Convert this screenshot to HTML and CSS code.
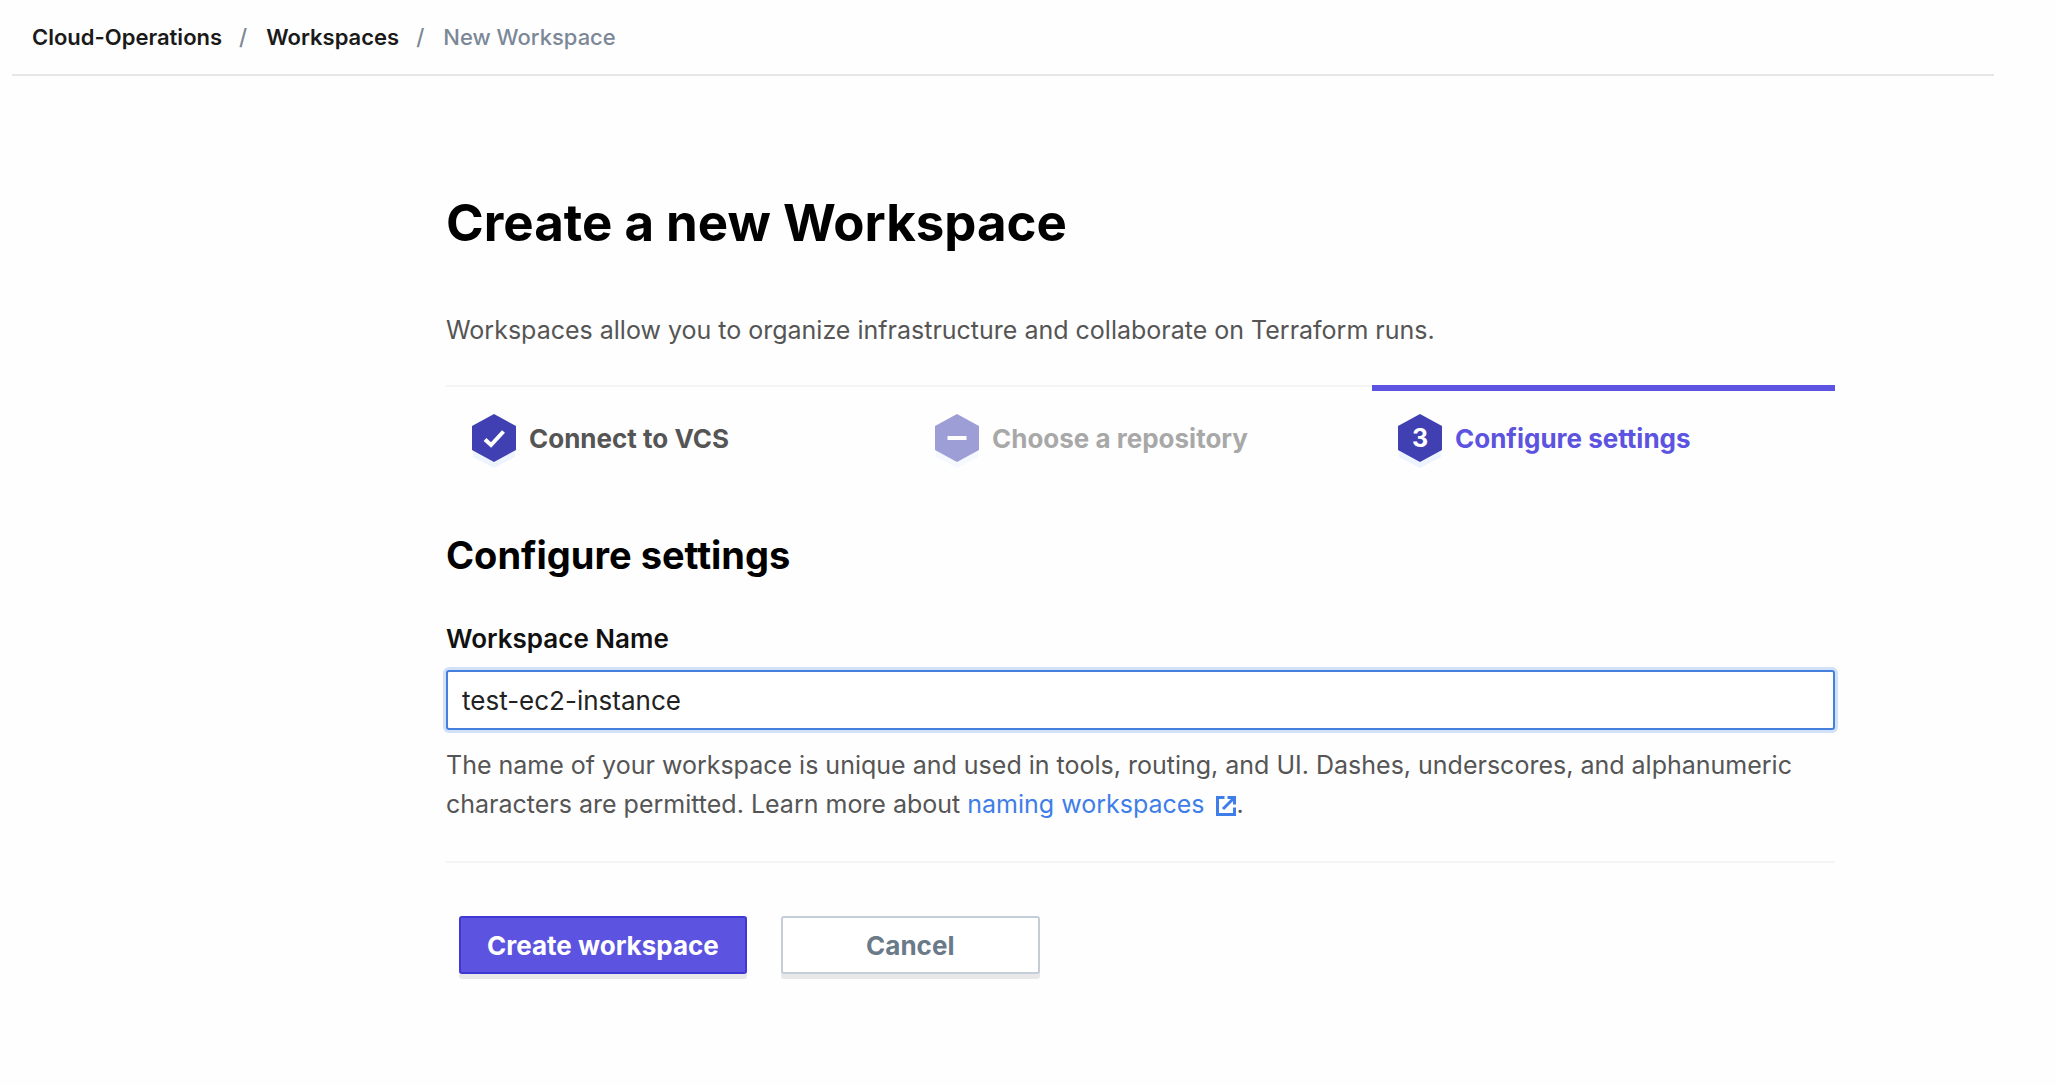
FILE: index.html
```html
<!DOCTYPE html>
<html lang="en">
<head>
  <meta charset="utf-8">
  <meta name="viewport" content="width=device-width, initial-scale=1">
  <title>New Workspace</title>
  <link rel="stylesheet" href="styles.css">
</head>
<body>
  <header class="page-header">
    <nav aria-label="Breadcrumb">
      <ol class="breadcrumb">
        <li><a href="#">Cloud-Operations</a></li>
        <li><a href="#">Workspaces</a></li>
        <li class="current" aria-current="page">New Workspace</li>
      </ol>
    </nav>
  </header>

  <main class="content">
    <h1 class="title">Create a new Workspace</h1>
    <p class="intro">Workspaces allow you to organize infrastructure and collaborate on Terraform runs.</p>

    <ol class="steps">
      <li class="step">
        <svg class="hex" viewBox="0 0 44 54" aria-hidden="true">
          <path class="hex-shadow" d="M22 6l21 12v25L22 54 1 43V18z"/>
          <path class="hex-face" d="M22 0l22 12v24L22 48 0 36V12z"/>
          <path class="hex-mark" d="M13 25.500l6 5.500L31.500 17.500"/>
        </svg>
        <span>Connect to VCS</span>
      </li>
      <li class="step skipped">
        <svg class="hex" viewBox="0 0 44 54" aria-hidden="true">
          <path class="hex-shadow" d="M22 6l21 12v25L22 54 1 43V18z"/>
          <path class="hex-face" d="M22 0l22 12v24L22 48 0 36V12z"/>
          <path class="hex-mark" d="M12.500 24h19"/>
        </svg>
        <span>Choose a repository</span>
      </li>
      <li class="step active" aria-current="step">
        <svg class="hex" viewBox="0 0 44 54" aria-hidden="true">
          <path class="hex-shadow" d="M22 6l21 12v25L22 54 1 43V18z"/>
          <path class="hex-face" d="M22 0l22 12v24L22 48 0 36V12z"/>
          <text class="hex-number" x="22" y="33" text-anchor="middle">3</text>
        </svg>
        <span>Configure settings</span>
      </li>
    </ol>

    <form class="settings">
      <h2 class="subtitle">Configure settings</h2>
      <label class="label" for="workspace-name">Workspace Name</label>
      <input class="input" id="workspace-name" type="text" value="test-ec2-instance" aria-describedby="name-help">
      <p class="help" id="name-help">The name of your workspace is unique and used in tools, routing, and UI. Dashes, underscores, and alphanumeric characters are permitted. Learn more about <a href="#">naming workspaces <svg class="external" viewBox="0 0 22 22" aria-hidden="true"><path d="M9.500 2.500H2.500v17h17v-7M12.500 2.500h7v7M19 3L8 14"/></svg></a>.</p>
      <div class="actions">
        <button class="button primary" type="submit">Create workspace</button>
        <button class="button secondary" type="button">Cancel</button>
      </div>
    </form>
  </main>
</body>
</html>
```
FILE: styles.css
```css
* {
  box-sizing: border-box;
}

body {
  margin: 0;
  background: #fefefe;
  color: #555;
  font-family: Inter, "Liberation Sans", sans-serif;
  font-size: 26px;
  font-variant-ligatures: none;
  line-height: 39px;
}

h1, h2, p, ol {
  margin: 0;
  padding: 0;
}

ol {
  list-style: none;
}

.page-header {
  margin: 0 62px 0 12px;
  padding: 18px 20px 17px;
  border-bottom: 2px solid #e6e6e6;
}

.breadcrumb {
  display: flex;
  font-size: 22px;
  font-weight: 500;
  color: #7c8797;
}

.breadcrumb a {
  color: #1a1a1a;
  font-weight: 600;
  text-decoration: none;
}

.breadcrumb li + li::before {
  content: "/";
  margin: 0 19px 0 17px;
}

.content {
  padding: 115px 221px 80px 446px;
}

.title {
  margin-bottom: 56px;
  color: #000;
  font-size: 51px;
  font-weight: 700;
  line-height: 64px;
}

.intro,
.help {
  font-size: 25px;
}

.intro {
  margin-bottom: 35px;
}

.steps {
  display: grid;
  grid-template-columns: repeat(3, 1fr);
  margin-bottom: 63px;
  font-weight: 700;
  box-shadow: inset 0 2px #f4f4f4;
}

.step {
  display: flex;
  gap: 13px;
  padding: 23px 26px 0;
  border-top: 6px solid transparent;
}

.step span {
  padding-top: 5px;
}

.step.active {
  border-color: #5c53e0;
  color: #5c53e0;
}

.step.skipped {
  opacity: 0.5;
}

.hex {
  flex: none;
  width: 44px;
  height: 54px;
}

.hex-shadow {
  fill: #edf4fd;
}

.hex-face {
  fill: #4040b2;
}

.hex-mark {
  fill: none;
  stroke: #fff;
  stroke-width: 4;
}

.hex-number {
  fill: #fff;
  font-size: 25px;
  font-weight: 700;
}

.subtitle {
  margin-bottom: 40px;
  color: #000;
  font-size: 38px;
  font-weight: 700;
  line-height: 48px;
}

.label {
  display: block;
  margin-bottom: 12px;
  color: #111;
  font-weight: 600;
}

.input {
  display: block;
  width: 100%;
  height: 60px;
  padding: 0 14px;
  border: 2px solid #4480dc;
  border-radius: 3px;
  outline: none;
  background: #fff;
  box-shadow: 0 0 0 3px #d3e1f8;
  color: #222;
  font: inherit;
}

.help {
  margin: 16px 0 37px;
}

.help a {
  color: #3f7ee8;
  text-decoration: none;
}

.external {
  width: 22px;
  height: 22px;
  margin-left: 3px;
  vertical-align: -4px;
  fill: none;
  stroke: currentColor;
  stroke-width: 3;
}

.actions {
  display: flex;
  gap: 34px;
  padding: 53px 13px 0;
  border-top: 2px solid #f4f4f4;
}

.button {
  height: 58px;
  padding: 0 26px;
  border: 2px solid;
  border-radius: 3px;
  box-shadow: 0 5px #e8e8e8;
  font: inherit;
  font-weight: 700;
}

.primary {
  border-color: #4038d4;
  background: #5c53e0;
  color: #fff;
}

.secondary {
  min-width: 259px;
  border-color: #c5ced8;
  background: #fff;
  color: #6b7a89;
}
```
